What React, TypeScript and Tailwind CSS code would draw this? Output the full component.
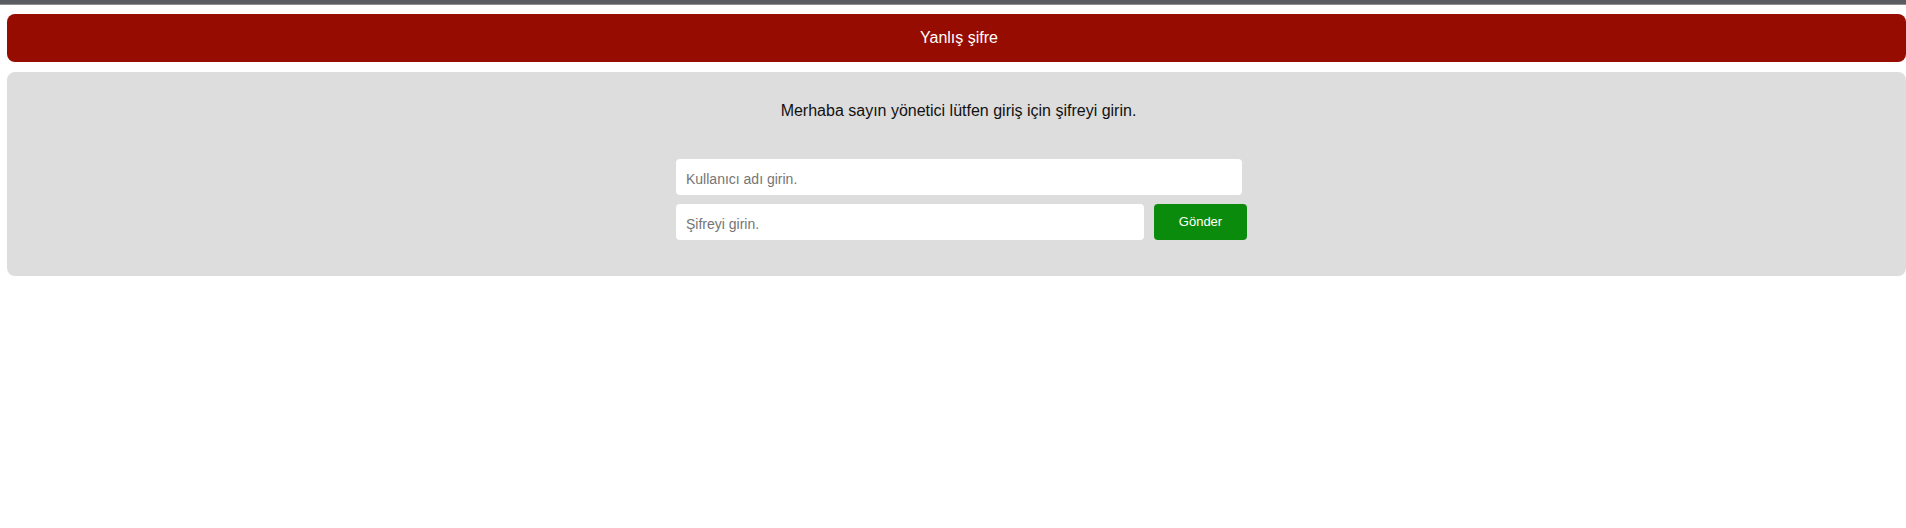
import React from "react";

export default function App() {
  return (
    <div
      className="w-full min-h-[528px] bg-white"
      style={{ fontFamily: '"Liberation Sans", Arial, sans-serif' }}
    >
      <div className="h-[4px] bg-[#5a5c61]" />
      <div className="h-[1px] bg-[#8e8f92]" />
      <div className="pl-[7px] pt-[9px] flex flex-col gap-[10px]">
        <div className="h-[48px] rounded-[8px] bg-[#970c00] flex items-center justify-center pl-[5px]">
          <span className="text-white text-[16px] leading-[18px]">Yanlış şifre</span>
        </div>
        <div className="rounded-[8px] bg-[#dddddd] pt-[30px] pb-[36px] pl-[669px]">
          <div className="w-[571px] flex flex-col">
            <p className="text-center text-[16px] leading-[18px] text-[#111111] pr-[6px]">
              Merhaba sayın yönetici lütfen giriş için şifreyi girin.
            </p>
            <input
              type="text"
              placeholder="Kullanıcı adı girin."
              className="mt-[39px] w-[566px] h-[36px] rounded-[4px] bg-white px-[10px] pt-[3px] text-[14px] outline-none placeholder:text-[#757575]"
            />
            <div className="mt-[9px] flex gap-[10px]">
              <input
                type="password"
                placeholder="Şifreyi girin."
                className="w-[468px] h-[36px] rounded-[4px] bg-white px-[10px] pt-[3px] text-[14px] outline-none placeholder:text-[#757575]"
                style={{ fontFamily: '"Liberation Sans", Arial, sans-serif' }}
              />
              <button className="w-[93px] h-[36px] rounded-[4px] bg-[#0b8b0b] text-white text-[13px]">
                Gönder
              </button>
            </div>
          </div>
        </div>
      </div>
    </div>
  );
}
